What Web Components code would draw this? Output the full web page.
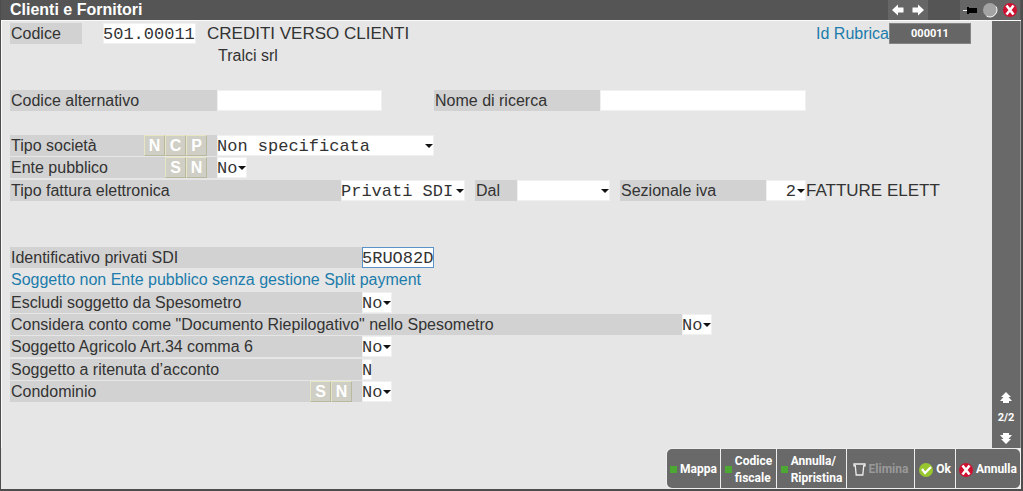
<!DOCTYPE html>
<html lang="it">
<head>
<meta charset="utf-8">
<meta name="viewport" content="width=device-width, initial-scale=1">
<title>Clienti e Fornitori</title>
<style>
  body { margin: 0; background: #e6e6e6; font-family: "Liberation Sans", Arial, sans-serif; color: #333; }
</style>
</head>
<body>
<app-window>
  <title-bar slot="title">Clienti e Fornitori</title-bar>

  <form-row>
    <form-field label="Codice" label-width="72" gap="21" width="93" value="501.00011"></form-field>
    <field-text indent="11">CREDITI VERSO CLIENTI</field-text>
    <record-id slot="end" value="000011">Id Rubrica</record-id>
  </form-row>
  <form-row space="24"><field-text indent="207" small>Tralci srl</field-text></form-row>
  <form-row space="24">
    <form-field label="Codice alternativo" label-width="207" width="165"></form-field>
    <form-field indent="52" label="Nome di ricerca" label-width="166" width="206"></form-field>
  </form-row>
  <form-row><form-field label="Tipo società" keys="NCP" label-width="207" kind="select" width="217" value="Non specificata"></form-field></form-row>
  <form-row space="2"><form-field label="Ente pubblico" keys="SN" label-width="207" kind="select" width="30" value="No"></form-field></form-row>
  <form-row space="46">
    <form-field label="Tipo fattura elettronica" label-width="331" kind="select" width="124" value="Privati SDI"></form-field>
    <form-field indent="10" label="Dal" label-width="42" kind="select" width="93"></form-field>
    <form-field indent="10" label="Sezionale iva" label-width="146" kind="select" width="40" value="2" numeric></form-field>
    <field-text>FATTURE ELETT</field-text>
  </form-row>
  <form-row><form-field label="Identificativo privati SDI" label-width="352" width="72" value="5RUO82D" active></form-field></form-row>
  <form-row space="2"><field-text small note>Soggetto non Ente pubblico senza gestione Split payment</field-text></form-row>
  <form-row><form-field label="Escludi soggetto da Spesometro" label-width="352" kind="select" width="30" value="No"></form-field></form-row>
  <form-row><form-field label="Considera conto come &quot;Documento Riepilogativo&quot; nello Spesometro" label-width="672" kind="select" width="30" value="No"></form-field></form-row>
  <form-row space="2"><form-field label="Soggetto Agricolo Art.34 comma 6" label-width="352" kind="select" width="30" value="No"></form-field></form-row>
  <form-row><form-field label="Soggetto a ritenuta d’acconto" label-width="352" width="10" value="N"></form-field></form-row>
  <form-row><form-field label="Condominio" keys="SN" label-width="352" kind="select" width="30" value="No"></form-field></form-row>

  <page-strip slot="side">2/2</page-strip>
  <action-bar slot="actions">
    <action-button icon="dot" width="53">Mappa</action-button>
    <action-button icon="dot" width="55">Codice<br>fiscale</action-button>
    <action-button icon="dot" width="69">Annulla/<br>Ripristina</action-button>
    <action-button icon="bin" width="67" disabled>Elimina</action-button>
    <action-button icon="ok" width="40">Ok</action-button>
    <action-button icon="cancel" width="64">Annulla</action-button>
  </action-bar>
</app-window>

<script>
const ICONS = {
  left: '<svg width="12" height="12" viewBox="0 0 12 12"><path d="M0 6 6 .5V3.500h5.500v5H6v3z" fill="#fff"/></svg>',
  right: '<svg width="12" height="12" viewBox="0 0 12 12"><path d="M12 6 6 .5V3.500H.5v5H6v3z" fill="#fff"/></svg>',
  pin: '<svg width="14" height="12" viewBox="0 0 14 12"><path d="M0 6.500h5" stroke="#eee"/><path d="M4 3h2v1h8v5H6v1H4z" fill="#000"/></svg>',
  round: '<svg width="16" height="16" viewBox="0 0 16 16"><circle cx="8" cy="8" r="7" fill="#a3a3a3"/><path d="M14 4.500A7 7 0 0 1 4.500 14" fill="none" stroke="#fff"/></svg>',
  cancel: '<svg width="14" height="14" viewBox="0 0 14 14"><circle cx="7" cy="7" r="7" fill="#cf1030"/><path d="m3.500 2.500 7 9M10.500 2.500l-7 9" stroke="#fff" stroke-width="2.600"/></svg>',
  ok: '<svg width="14" height="14" viewBox="0 0 14 14"><circle cx="7" cy="7" r="7" fill="#98c62e"/><path d="m3 6 3 4 6-6" fill="none" stroke="#fff" stroke-width="2.200"/></svg>',
  bin: '<svg width="13" height="13" viewBox="0 0 13 13"><path d="M1 3.500V1h11v2.500M2.200 2l1 10h6.600l1-10" fill="none" stroke="#eee" stroke-width="1.300"/></svg>',
  dot: '<svg width="7" height="7" viewBox="0 0 7 7"><path d="M0 0h7v7H0z" fill="#4ca832"/></svg>',
  up: '<svg width="12" height="12" viewBox="0 0 12 12"><path d="m6 0 5 5H8.500L12 9H9v2H3V9H0l3.500-4H1z" fill="#fff"/></svg>',
  down: '<svg width="12" height="12" viewBox="0 0 12 12"><path d="M6 12 1 7h2.500L0 3h3V1h6v2h3L8.500 7H11z" fill="#fff"/></svg>',
  caret: '<svg width="8" height="4" viewBox="0 0 8 4"><path d="M0 0h8L4 4z" fill="#111"/></svg>'
};

class Base extends HTMLElement {
  render(html) { this.attachShadow({ mode: 'open' }).innerHTML = html; }
  attr(name, fallback = '') { return this.getAttribute(name) ?? fallback; }
}

customElements.define('app-window', class extends Base {
  connectedCallback() {
    this.render(`<style>
      :host { display: flex; flex-direction: column; box-sizing: border-box; min-height: 100vh;
        border: solid #4d4d4d; border-width: 0 2px 2px 1px; background: #e6e6e6; }
      .body { display: flex; flex: 1; border: solid #fafafa; border-width: 1px 0 0 1px; }
      main { flex: 1; min-width: 0; padding: 2px 21px 2px 8px; }
      .actions { display: flex; justify-content: flex-end; }
    </style>
    <slot name="title"></slot>
    <div class="body"><main><slot></slot></main><slot name="side"></slot></div>
    <div class="actions"><slot name="actions"></slot></div>`);
  }
});

customElements.define('title-bar', class extends Base {
  connectedCallback() {
    this.render(`<style>
      :host { display: flex; align-items: center; height: 20px; padding: 0 1px 0 9px; background: #555; color: #fff; }
      h1 { margin: 0; flex: 1; font: bold 16px/20px "Liberation Sans", Arial, sans-serif; }
      .group { display: flex; background: #666; height: 20px; }
      .gap { margin-right: 32px; }
      button { display: grid; place-items: center; width: 20px; height: 20px; padding: 0; border: 0; background: none; }
    </style>
    <h1><slot></slot></h1>
    <div class="group gap"><button aria-label="Precedente">${ICONS.left}</button><button aria-label="Successivo">${ICONS.right}</button></div>
    <div class="group"><button aria-label="Blocca">${ICONS.pin}</button><button aria-label="Riduci">${ICONS.round}</button><button aria-label="Chiudi">${ICONS.cancel}</button></div>`);
  }
});

customElements.define('form-row', class extends Base {
  connectedCallback() {
    this.render(`<style>
      :host { display: flex; height: 21px; margin-bottom: ${this.attr('space', '1')}px; white-space: nowrap; }
      .end { margin-left: auto; }
    </style><slot></slot><div class="end"><slot name="end"></slot></div>`);
  }
});

customElements.define('field-text', class extends Base {
  connectedCallback() {
    this.render(`<style>
      :host { display: block; margin-left: ${this.attr('indent', '0')}px; font-size: 17px; line-height: 21px; }
      :host([small]) { padding-left: 1px; font-size: 16px; }
      :host([note]) { color: #1c7cab; }
    </style><slot></slot>`);
  }
});

customElements.define('record-id', class extends Base {
  connectedCallback() {
    this.render(`<style>
      :host { display: flex; color: #1c7cab; font-size: 16px; line-height: 21px; }
      button { width: 82px; height: 21px; padding: 0; border: 1px solid #858585; background: #666; color: #fff;
        font: bold 11px/19px Roboto, sans-serif; }
    </style><label for="id"><slot></slot></label><button id="id">${this.attr('value')}</button>`);
  }
});

customElements.define('form-field', class extends Base {
  connectedCallback() {
    const value = this.attr('value');
    const keys = [...this.attr('keys')].map(k => `<button>${k}</button>`).join('');
    const control = this.attr('kind') === 'select'
      ? `<select id="c"><option>${value}</option></select>${ICONS.caret}`
      : `<input id="c" value="${value}">`;
    this.render(`<style>
      :host { display: flex; height: 21px; margin-left: ${this.attr('indent', '0')}px; }
      .caption { display: flex; box-sizing: border-box; width: ${this.attr('label-width')}px; padding-left: 1px;
        margin-right: ${this.attr('gap', '0')}px; background: #d2d2d2; }
      label { flex: 1; font-size: 16px; line-height: 21px; }
      .keys { display: flex; margin-right: 10px; }
      .keys:empty { display: none; }
      button { box-sizing: border-box; width: 21px; height: 21px; padding: 0; border: 1px solid; border-color: #e6e6c4 #b9b9a0 #b9b9a0 #e6e6c4;
        background: #cfcfc6; color: #fff; font: bold 16px/19px "Liberation Sans", Arial, sans-serif; }
      .control { display: grid; align-items: center; width: ${this.attr('width')}px; }
      .control > * { grid-area: 1 / 1; }
      input, select { appearance: none; box-sizing: border-box; width: 100%; height: 21px; margin: 0; padding: 2px 0 0; border: 0; border-radius: 0;
        outline: 0; background: #fff; color: #333; font: 17px/19px "Liberation Mono", monospace; box-shadow: inset 0 0 0 1px #f0f0f0; }
      svg { justify-self: end; margin-right: 1px; pointer-events: none; }
      :host([numeric]) select { padding-right: 10px; text-align-last: right; }
      :host([active]) input { box-shadow: inset 0 0 0 1px #5a93c8; }
    </style>
    <div class="caption"><label for="c">${this.attr('label')}</label><div class="keys">${keys}</div></div>
    <div class="control">${control}</div>`);
  }
});

customElements.define('page-strip', class extends Base {
  connectedCallback() {
    this.render(`<style>
      :host { display: flex; flex-direction: column; align-items: center; justify-content: flex-end; gap: 7px; box-sizing: border-box;
        width: 29px; padding-bottom: 4px; border-right: 1px solid #999; background: #696969; color: #fff;
        font: bold 11px/14px Roboto, sans-serif; }
      button { display: grid; padding: 0; border: 0; background: none; }
    </style>
    <button aria-label="Pagina precedente">${ICONS.up}</button><span><slot></slot></span><button aria-label="Pagina successiva">${ICONS.down}</button>`);
  }
});

customElements.define('action-bar', class extends Base {
  connectedCallback() {
    this.render(`<style>
      :host { display: flex; gap: 1px; padding: 1px; background: #eee; border-radius: 5px 0 0 5px; }
      ::slotted(:first-child) { border-radius: 5px 0 0 5px; }
      ::slotted(:last-child) { border-radius: 0 5px 5px 0; }
    </style><slot></slot>`);
  }
});

customElements.define('action-button', class extends Base {
  connectedCallback() {
    this.render(`<style>
      :host { display: block; overflow: hidden; }
      button { display: flex; align-items: center; justify-content: center; gap: 3px; box-sizing: border-box;
        width: ${this.attr('width')}px; height: 39px; padding: 2px 0 0; border: 0; background: #696969; color: #fff; text-align: left;
        white-space: nowrap; font: bold 12px/17px Roboto, sans-serif; }
      button:disabled { color: #999; }
      svg { flex: none; }
    </style>
    <button ${this.hasAttribute('disabled') ? 'disabled' : ''}>${ICONS[this.attr('icon')]}<span><slot></slot></span></button>`);
  }
});
</script>
</body>
</html>
